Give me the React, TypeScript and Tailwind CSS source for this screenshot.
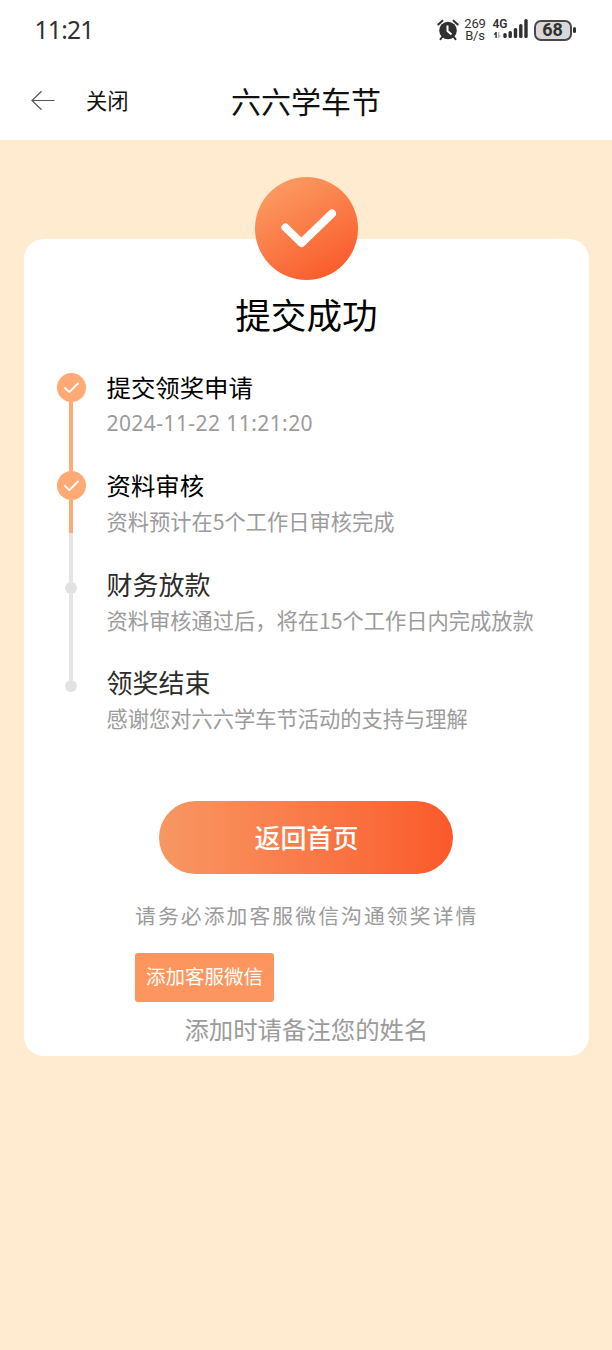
interface Step {
    title: string;
    detail: string;
    titleClass: string;
    detailClass?: string;
}

const steps: Step[] = [
    {
        title: "提交领奖申请",
        detail: "2024-11-22 11:21:20",
        titleClass: "text-[24.4px] text-black",
        detailClass: "font-['Noto_Sans','Noto_Sans_CJK_SC',sans-serif] text-[21px] tracking-[0.43px]",
    },
    {title: "资料审核", detail: "资料预计在5个工作日审核完成", titleClass: "text-[24.4px] text-black"},
    {title: "财务放款", detail: "资料审核通过后，将在15个工作日内完成放款", titleClass: "text-[26px] text-[#2c2c2c]"},
    {title: "领奖结束", detail: "感谢您对六六学车节活动的支持与理解", titleClass: "text-[26px] text-[#2c2c2c]"},
];

function AlarmIcon() {
    return (
        <svg width="22" height="22" viewBox="0 0 22 22" fill="none">
            <circle cx="11" cy="11.5" r="8.8" fill="#303030"/>
            <path d="M1.3 5.6 5.4 1.8M20.7 5.6 16.6 1.8" stroke="#303030" strokeWidth="2" strokeLinecap="round"/>
            <path d="M5.2 18 3.5 20.2M16.8 18l1.7 2.2" stroke="#303030" strokeWidth="2" strokeLinecap="round"/>
            <path d="M10.5 6.5v5.6l4 3.4" stroke="#fff" strokeWidth="2"/>
        </svg>
    )
}

function SignalIcon() {
    return (
        <svg width="36" height="22" viewBox="0 0 36 22" fill="#303030">
            <path d="M.5 15.7 2.6 13h1.2v6H2.4v-3.3z"/>
            <path d="M5 13h1.3v3.3h1.6L5.8 19H5z" fill="#b5b5b5"/>
            <rect x="10.3" y="14" width="3.4" height="5" rx="1.5"/>
            <rect x="15.5" y="12" width="3.4" height="7" rx="1.5"/>
            <rect x="20.8" y="9" width="3.4" height="10" rx="1.5"/>
            <rect x="26.1" y="5" width="3.4" height="14" rx="1.5"/>
            <rect x="31.3" y="0" width="3.4" height="19" rx="1.5"/>
        </svg>
    )
}

function StatusBar() {
    return (
        <div className="flex h-[60px] items-center justify-between pr-[36.5px] pl-[34.5px] text-[#303030]">
            <span className="font-['Noto_Sans','Noto_Sans_CJK_SC',sans-serif] text-[24.5px] tracking-[-0.7px]">11:21</span>
            <div className="flex h-[26px] items-center">
                <AlarmIcon/>
                <div className="ml-[4.5px] flex w-[23px] flex-col items-center font-[Roboto,sans-serif] text-[13px] leading-[12px] tracking-[-0.2px]">
                    <span>269</span>
                    <span>B/s</span>
                </div>
                <div className="relative ml-[6px] h-[22px] w-[36px]">
                    <SignalIcon/>
                    <span className="absolute -top-px left-0 font-[Roboto,sans-serif] text-[12px] leading-[12px] font-semibold">4G</span>
                </div>
                <div className="ml-[5px] flex h-[21px] w-[38px] items-center justify-center rounded-[7px] border-2 border-[#484848] bg-[#d8d8d8] font-[Roboto,sans-serif] text-[18px] leading-none font-bold">
                    68
                </div>
                <div className="ml-[1.5px] h-[6px] w-[2.5px] rounded-full bg-[#303030]"/>
            </div>
        </div>
    )
}

function NavBar() {
    return (
        <div className="grid h-[80px] grid-cols-[1fr_auto_1fr] items-center text-[#111]">
            <div className="flex items-center pl-[31px]">
                <svg width="24" height="20" viewBox="0 0 24 20" fill="none" stroke="#555" strokeWidth="1.2">
                    <path d="M23.5 10.5H1M10.5 1.2 1 10.5l9.5 9.3"/>
                </svg>
                <span className="ml-[31px] text-[21.3px]">关闭</span>
            </div>
            <h1 className="text-[30px]">六六学车节</h1>
        </div>
    )
}

function DoneMark() {
    return (
        <div className="flex size-[29px] shrink-0 items-center justify-center rounded-full bg-[#ffaa74]">
            <svg width="15" height="12" viewBox="0 0 15 12" fill="none">
                <path d="M1 6l4.3 4.2L14 1.5" stroke="#fff" strokeWidth="1.8" strokeLinecap="round" strokeLinejoin="round"/>
            </svg>
        </div>
    )
}

function Rail() {
    return (
        <div className="flex w-[29px] flex-col items-center">
            <DoneMark/>
            <div className="h-[69px] w-[4px] bg-[#ffaa74]"/>
            <DoneMark/>
            <div className="h-[33px] w-[4px] bg-[#ffaa74]"/>
            <div className="h-[49px] w-[4px] bg-[#e5e5e5]"/>
            <div className="size-[12px] rounded-full bg-[#e2e2e2]"/>
            <div className="h-[86px] w-[4px] bg-[#e5e5e5]"/>
            <div className="size-[12px] rounded-full bg-[#e2e2e2]"/>
        </div>
    )
}

export default function App() {
    return (
        <div className="min-h-[1350px] w-[612px] bg-[#feebd0] font-['Noto_Sans_CJK_SC',sans-serif]">
            <header className="bg-white">
                <StatusBar/>
                <NavBar/>
            </header>
            <main className="pt-[99px] pr-[23.5px] pl-[24.3px]">
                <section className="flex h-[817px] flex-col rounded-[20px] bg-white">
                    <div className="-mt-[62px] flex size-[103px] items-center justify-center self-center rounded-full bg-linear-[150deg,#fb9c62_10%,#fa5a2b_90%]">
                        <svg width="60" height="42" viewBox="0 0 60 42" fill="none">
                            <path d="M9.5 19.5 25.5 35 56 5.5" stroke="#fff" strokeWidth="8" strokeLinecap="round" strokeLinejoin="round"/>
                        </svg>
                    </div>
                    <h2 className="mt-[10px] text-center text-[35.6px] leading-[48px] text-black">提交成功</h2>
                    <div className="mt-[35px] flex pl-[32.5px]">
                        <Rail/>
                        <ol className="-mt-[1.5px] ml-[20.7px] flex flex-col">
                            {steps.map((step) => (
                                <li key={step.title} className="h-[98.5px] whitespace-nowrap">
                                    <h3 className={`leading-[29px] ${step.titleClass}`}>{step.title}</h3>
                                    <p className={`mt-[7px] leading-[30px] text-[#9b9b9b] ${step.detailClass ?? "text-[21.25px]"}`}>
                                        {step.detail}
                                    </p>
                                </li>
                            ))}
                        </ol>
                    </div>
                    <button className="mt-[35.5px] h-[73px] w-[294px] self-center rounded-full bg-linear-to-r from-[#f79762] to-[#fa592a] pb-[3px] text-[26px] font-medium text-white">
                        返回首页
                    </button>
                    <div className="ml-[110.7px] flex flex-col items-start">
                        <p className="mt-[26px] text-[20.8px] leading-[30px] tracking-[2.1px] whitespace-nowrap text-[#9b9b9b]">
                            请务必添加客服微信沟通领奖详情
                        </p>
                        <button className="mt-[23px] h-[49px] w-[139px] rounded-[3px] bg-[#fc965e] pb-[3px] text-[19.5px] text-white">
                            添加客服微信
                        </button>
                    </div>
                    <p className="mt-[9.5px] text-center text-[24.4px] leading-[34px] text-[#9b9b9b]">添加时请备注您的姓名</p>
                </section>
            </main>
        </div>
    )
}
